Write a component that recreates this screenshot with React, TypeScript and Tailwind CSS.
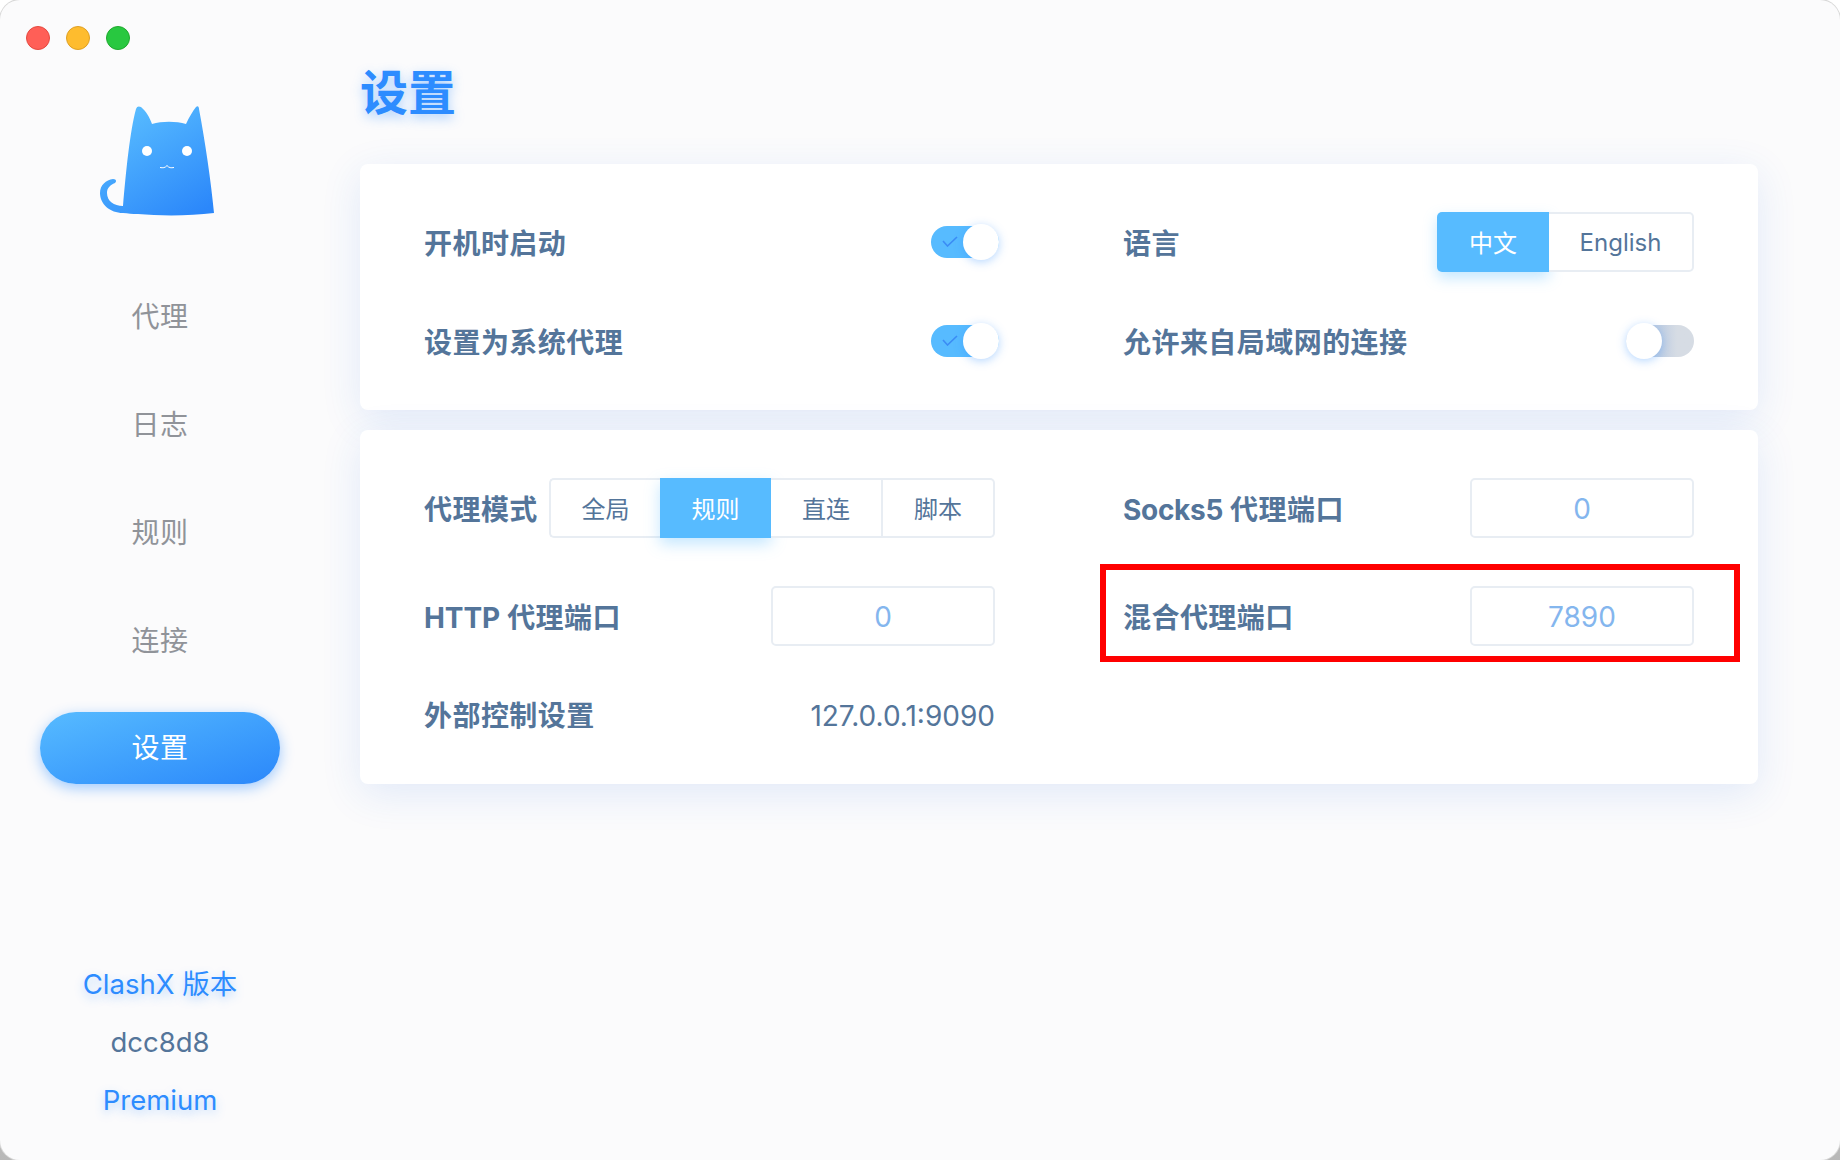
const font = "font-['Inter','Noto_Sans_CJK_SC',sans-serif]";

function Switch({ on }: { on: boolean }) {
  return (
    <div className={on ? "relative mr-[-4px] h-9 w-[68px]" : "relative h-9 w-[68px]"}>
      <div
        className={
          on
            ? "absolute left-0 right-0 top-[2px] h-8 rounded-full bg-[#57bbff]"
            : "absolute left-0 right-0 top-[2px] h-8 rounded-full bg-gradient-to-r from-[#c0cee2] from-50% to-[#d6dce4] to-75%"
        }
      >
        {on && (
          <svg className="absolute left-[11px] top-[10px]" width="16" height="11" viewBox="0 0 16 11" fill="none">
            <path d="M1 5 L5.500 10 L15 1" stroke="#3b8cf5" strokeWidth="1.6" />
          </svg>
        )}
      </div>
      <div
        className={
          on
            ? "absolute right-0 top-0 h-9 w-9 rounded-full bg-white shadow-[0_2px_10px_rgba(45,140,255,0.35)]"
            : "absolute left-0 top-0 h-9 w-9 rounded-full bg-white shadow-[0_2px_10px_rgba(45,140,255,0.35)]"
        }
      />
    </div>
  );
}

function Label({ children }: { children: React.ReactNode }) {
  return <span className="-ml-px pt-1 text-[28px] font-bold leading-10 tracking-[0.45px] text-[#54759a]">{children}</span>;
}

function PortInput({ value }: { value: string }) {
  return (
    <div className="flex h-[60px] w-[224px] items-center justify-center rounded-[5px] border-2 border-[#e8edf3] bg-white pt-px text-[28px] text-[#84b6ee]">
      {value}
    </div>
  );
}

function Row({ children, className }: { children: React.ReactNode; className?: string }) {
  return <div className={"flex items-center justify-between " + (className ?? "h-[60px]")}>{children}</div>;
}

function Segment({ text, active, className }: { text: string; active?: boolean; className: string }) {
  return (
    <div
      className={
        active
          ? "flex h-[60px] items-center justify-center bg-[#57bbff] pt-1 text-[24px] text-white shadow-[0_6px_14px_rgba(87,187,255,0.35)] " + className
          : "flex h-[60px] items-center justify-center border-y-2 border-[#e8edf3] bg-white pt-1 text-[24px] text-[#54759a] " + className
      }
    >
      {text}
    </div>
  );
}

function Cat() {
  return (
    <svg width="114" height="110" viewBox="0 0 114 110" className="ml-[100px] mt-[106px] block">
      <defs>
        <linearGradient id="catFill" x1="0.25" y1="0.05" x2="0.85" y2="1">
          <stop offset="0" stopColor="#57bbff" />
          <stop offset="1" stopColor="#2b87fa" />
        </linearGradient>
      </defs>
      <path
        d="M23 100 C26 65 30 25 36 3 C37 0 39 0 41 1 C46 5 50 12 52 18 C62 15 76 15 86 18 C89 11 93 5 96 1 C98 -1 99 1 99 3 C105 35 111 75 114 107 C90 110 60 110 38 108 C32 108 28 107.500 23 107 C10 107 0 98 0 87 C0 79 6 74 13 73 C16 73 17 75 15 77 C10 79 7 82 7 87 C7 95 14 100 23 100 Z"
        fill="url(#catFill)"
      />
      <circle cx="47" cy="45" r="5" fill="#fff" />
      <circle cx="87" cy="45" r="5" fill="#fff" />
      <path d="M60 61.500 C63 62 65 62 67 59.500 C69 62 71 62 74 61.500" stroke="#fff" strokeWidth="1" fill="none" />
    </svg>
  );
}

export default function App() {
  return (
    <div className="h-[1160px] w-[1840px] bg-gradient-to-b from-white from-50% to-[#b8b8b8]">
      <div className={"relative flex h-[1160px] w-[1840px] overflow-hidden rounded-[20px] bg-[#fbfbfc] ring-1 ring-[#d8d8d8] " + font}>
        <div className="absolute left-[26px] top-[26px] flex gap-4">
          <span className="h-6 w-6 rounded-full border border-[#e5493f] bg-[#ff5f57]" />
          <span className="h-6 w-6 rounded-full border border-[#dfa023] bg-[#febc2e]" />
          <span className="h-6 w-6 rounded-full border border-[#1fa92e] bg-[#28c840]" />
        </div>

        <aside className="flex w-[360px] shrink-0 flex-col">
          <Cat />
          <nav className="ml-10 mt-[64px] flex w-[240px] flex-col gap-9 text-[28px] tracking-[0.4px] text-[#909399]">
            <div className="flex h-[72px] items-center justify-center pt-px">代理</div>
            <div className="flex h-[72px] items-center justify-center pt-px">日志</div>
            <div className="flex h-[72px] items-center justify-center pt-px">规则</div>
            <div className="flex h-[72px] items-center justify-center pt-px">连接</div>
            <div className="flex h-[72px] items-center justify-center rounded-full bg-gradient-to-br from-[#57bbff] to-[#2b87fa] text-white shadow-[0_4px_14px_rgba(45,140,255,0.45)]">
              设置
            </div>
          </nav>
          <div className="ml-10 mt-auto flex w-[240px] flex-col items-center gap-[18px] pb-[40px] text-[27.5px] leading-10">
            <span className="text-[#2d8cff] [text-shadow:0_4px_10px_rgba(45,140,255,0.35)]">ClashX 版本</span>
            <span className="text-[#54759a]">dcc8d8</span>
            <span className="text-[#2d8cff] [text-shadow:0_4px_10px_rgba(45,140,255,0.35)]">Premium</span>
          </div>
        </aside>

        <main className="w-[1398px]">
          <h1 className="mt-[60px] flex h-[66px] items-center text-[48px] font-bold text-[#2d8cff] [text-shadow:0_4px_12px_rgba(45,140,255,0.4)]">
            设置
          </h1>

          <section className="mt-[38px] grid h-[246px] grid-cols-[570px_570px] content-start gap-x-[129px] gap-y-[39px] rounded-lg bg-white px-[65px] pt-12 shadow-[0_10px_40px_rgba(45,110,220,0.12)]">
            <Row>
              <Label>开机时启动</Label>
              <Switch on />
            </Row>
            <Row>
              <Label>语言</Label>
              <div className="flex">
                <Segment text="中文" active className="w-[112px] rounded-l-[5px]" />
                <div className="flex h-[60px] w-[145px] items-center justify-center rounded-r-[5px] border-2 border-l-0 border-[#e8edf3] bg-white pt-[2px] text-[24px] text-[#54759a]">
                  English
                </div>
              </div>
            </Row>
            <Row>
              <Label>设置为系统代理</Label>
              <Switch on />
            </Row>
            <Row>
              <Label>允许来自局域网的连接</Label>
              <Switch on={false} />
            </Row>
          </section>

          <section className="mt-5 grid h-[354px] grid-cols-[570px_570px] content-start gap-x-[129px] gap-y-12 rounded-lg bg-white px-[65px] pt-12 shadow-[0_10px_40px_rgba(45,110,220,0.12)]">
            <Row>
              <Label>代理模式</Label>
              <div className="flex w-[446px]">
                <Segment text="全局" className="w-[111px] rounded-l-[5px] border-l-2" />
                <Segment text="规则" active className="w-[111px]" />
                <Segment text="直连" className="w-[112px] border-r-2" />
                <Segment text="脚本" className="w-[112px] rounded-r-[5px] border-r-2" />
              </div>
            </Row>
            <Row>
              <Label>
                <span className="tracking-[-0.3px]">Socks5</span> 代理端口
              </Label>
            <PortInput value="0" />
            </Row>
            <Row>
              <Label>
                <span className="tracking-[-0.1px]">HTTP</span> 代理端口
              </Label>
              <PortInput value="0" />
            </Row>
            <div className="relative">
              <Row>
                <Label>混合代理端口</Label>
                <PortInput value="7890" />
              </Row>
              <div className="absolute left-[-24px] top-[-22px] h-[98px] w-[640px] border-[6px] border-[#ff0000]" />
            </div>
            <Row className="h-[40px]">
              <Label>外部控制设置</Label>
              <span className="pt-1 text-[28px] text-[#54759a]">127.0.0.1:9090</span>
            </Row>
          </section>
        </main>
      </div>
    </div>
  );
}
